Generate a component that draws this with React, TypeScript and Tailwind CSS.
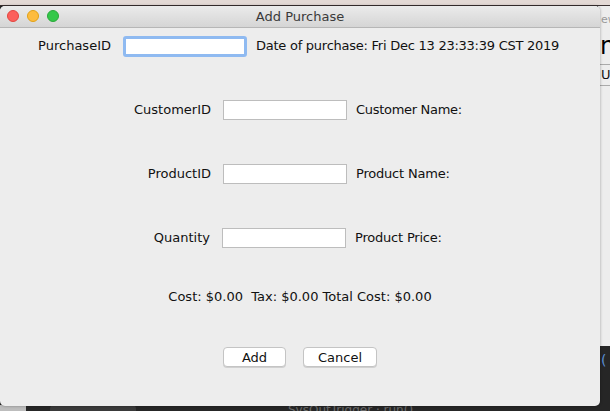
const Field = ({ focused = false }: { focused?: boolean }) => (
  <div
    className={
      focused
        ? "h-[21px] w-[124px] rounded-[3px] border-[3px] border-[#8fbaf1] bg-white"
        : "h-[20px] w-[124px] border border-[#bdbdbd] bg-white"
    }
  />
);

const Row = ({
  label,
  labelWidth,
  gap,
  right,
  rightClass = "",
  focused,
}: {
  label: string;
  labelWidth: string;
  gap: string;
  right: string;
  rightClass?: string;
  focused?: boolean;
}) => (
  <div className="flex h-[20px] items-center">
    <div className={`${labelWidth} text-right`}>{label}</div>
    <div className={gap}>
      <Field focused={focused} />
    </div>
    <div className={`ml-[9px] whitespace-nowrap ${rightClass}`}>{right}</div>
  </div>
);

export default function App() {
  return (
    <div
      className="relative h-[411px] w-[610px] overflow-hidden bg-[#262626] text-[13px] text-[#111111]"
      style={{ fontFamily: '"DejaVu Sans", "Liberation Sans", sans-serif' }}
    >
      {/* desktop behind the dialog */}
      <div className="absolute left-0 top-0 h-[6px] w-full border-b border-[#3a3030] bg-[#e3d9d5]" />
      <div className="absolute left-[598px] top-[6px] h-[340px] w-[12px] overflow-hidden bg-[#ededed]">
        <div className="absolute left-[3px] top-[6px] text-[11px] text-[#9a9a9a]">ew</div>
        <div className="absolute left-[2px] top-[28px] text-[24px] leading-none text-black">n</div>
        <div className="absolute left-0 top-[58px] h-[22px] w-full border-y border-[#aaaaaa] pl-[3px] text-[13px] leading-[20px]">
          Up
        </div>
      </div>
      <div className="absolute left-[601px] top-[350px] text-[14px] text-[#5b8fd6]">(</div>
      <div className="absolute bottom-0 left-0 h-[6px] w-[26px] bg-[#bdbdbd]" />
      <div className="absolute bottom-0 left-[50px] h-[6px] w-[86px] rounded-t bg-[#3a3a3a]" />
      <div className="absolute bottom-[-8px] left-[288px] text-[12px] text-[#6a6a6a]">SysOutTrigger · run()</div>

      {/* dialog window */}
      <div className="absolute left-0 top-[6px] flex h-[400px] w-[600px] flex-col overflow-hidden rounded-[5px] bg-[#ededed] shadow-[0_0_3px_rgba(0,0,0,0.35)]">
        <div className="relative flex h-[22px] items-center justify-center border-b border-[#b6b6b6] bg-gradient-to-b from-[#ebebeb] to-[#d5d5d5]">
          <div className="absolute left-[7px] top-[4px] flex gap-[8px]">
            <span className="h-[12px] w-[12px] rounded-full border border-[#e2463f] bg-[#fc605c]" />
            <span className="h-[12px] w-[12px] rounded-full border border-[#e1a116] bg-[#fdbc40]" />
            <span className="h-[12px] w-[12px] rounded-full border border-[#2aa83a] bg-[#34c84a]" />
          </div>
          <span className="text-[13px] text-[#3a3a3a]">Add Purchase</span>
        </div>

        <div className="flex flex-col pt-[8px]">
          <Row
            label="PurchaseID"
            labelWidth="w-[111px]"
            gap="ml-[12px]"
            right="Date of purchase: Fri Dec 13 23:33:39 CST 2019"
            rightClass="tracking-[-0.25px]"
            focused
          />
          <div className="mt-[44px]">
            <Row
              label="CustomerID"
              labelWidth="w-[211px]"
              gap="ml-[12px]"
              right="Customer Name:"
              rightClass="tracking-[-0.3px]"
            />
          </div>
          <div className="mt-[44px]">
            <Row
              label="ProductID"
              labelWidth="w-[211px]"
              gap="ml-[12px]"
              right="Product Name:"
              rightClass="tracking-[-0.2px]"
            />
          </div>
          <div className="mt-[44px]">
            <Row
              label="Quantity"
              labelWidth="w-[210px]"
              gap="ml-[12px]"
              right="Product Price:"
              rightClass="tracking-[-0.2px]"
            />
          </div>
          <div className="mt-[39px] flex h-[20px] items-center justify-center whitespace-pre">
            Cost: $0.00  Tax: $0.00 Total Cost: $0.00
          </div>
          <div className="mt-[40px] flex justify-center gap-[17px]">
            <button className="h-[20px] w-[63px] rounded-[4px] border border-[#c4c4c4] bg-white text-[13px] leading-none shadow-[0_1px_0_rgba(0,0,0,0.12)]">
              Add
            </button>
            <button className="h-[20px] w-[74px] rounded-[4px] border border-[#c4c4c4] bg-white text-[13px] leading-none shadow-[0_1px_0_rgba(0,0,0,0.12)]">
              Cancel
            </button>
          </div>
        </div>
      </div>
    </div>
  );
}
